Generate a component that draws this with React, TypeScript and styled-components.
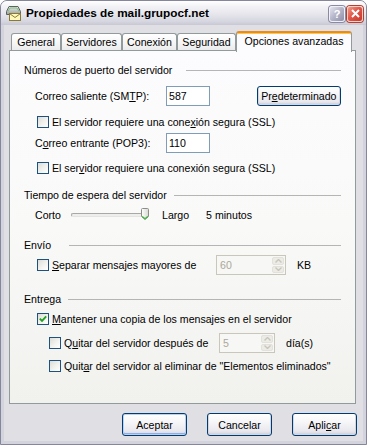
import React from "react";
import styled, { createGlobalStyle } from "styled-components";

const GlobalStyle = createGlobalStyle`
  html, body { margin: 0; padding: 0; background: #ffffff; }
  body {
    font-family: "Liberation Sans", Arial, sans-serif;
    font-size: 10.6px;
    color: #000;
  }
  #root { width: 367px; height: 445px; }
`;

const Window = styled.div`
  width: 367px;
  height: 445px;
  box-sizing: border-box;
  display: flex;
  flex-direction: column;
  border: 1px solid #85859c;
  border-radius: 7px 7px 0 0;
  background: #d3d3de;
  overflow: hidden;
`;

const TitleBar = styled.div`
  height: 24px;
  flex: none;
  display: flex;
  align-items: center;
  padding: 0 3px 0 4px;
  background: linear-gradient(
    to bottom,
    #ffffff 0%,
    #f4f4f7 20%,
    #e6e6ec 55%,
    #d6d6e0 85%,
    #c8c8d4 100%
  );
`;

const TitleText = styled.span`
  margin-left: 4px;
  font-weight: bold;
  font-size: 11.8px;
  color: #000;
  letter-spacing: 0;
`;

const CaptionButtons = styled.div`
  margin-left: auto;
  display: flex;
  gap: 2px;
  padding-top: 1px;
`;

const CapBtn = styled.div<{ $close?: boolean }>`
  width: 16px;
  height: 16px;
  box-sizing: border-box;
  border: 1px solid ${(p) => (p.$close ? "#f4d0c8" : "#f0f0f6")};
  border-radius: 3px;
  box-shadow: 0 0 0 1px ${(p) => (p.$close ? "#b04030" : "#8a8aa4")};
  background: ${(p) =>
    p.$close
      ? "linear-gradient(135deg, #f09a88 0%, #e0584a 45%, #c8382a 100%)"
      : "linear-gradient(135deg, #e4e4ee 0%, #b4b4c8 50%, #8e8eaa 100%)"};
  display: flex;
  align-items: center;
  justify-content: center;
  color: #fff;
  font-weight: bold;
  font-size: 11px;
  font-family: "Liberation Sans", Arial, sans-serif;
`;

const Body = styled.div`
  flex: 1;
  margin: 0 3px 3px;
  background: #e0dfe3;
  display: flex;
  flex-direction: column;
  padding: 6px 7px 5px 5px;
`;

const TabStrip = styled.div`
  height: 19px;
  flex: none;
  display: flex;
  align-items: flex-end;
  padding-left: 2px;
  position: relative;
  z-index: 1;
`;

const Tab = styled.div<{ $w: number; $active?: boolean }>`
  width: ${(p) => p.$w}px;
  height: ${(p) => (p.$active ? 21 : 17)}px;
  margin-bottom: ${(p) => (p.$active ? -2 : 0)}px;
  box-sizing: border-box;
  border: 1px solid #919b9c;
  border-bottom: none;
  border-top: ${(p) => (p.$active ? "2px solid #e68b2c" : "1px solid #919b9c")};
  border-radius: 3px 3px 0 0;
  box-shadow: ${(p) => (p.$active ? "inset 0 1px 0 #ffc73c" : "none")};
  background: ${(p) =>
    p.$active ? "#fcfcfe" : "linear-gradient(to bottom, #ffffff 0%, #f7f7f8 50%, #ebebed 100%)"};
  display: flex;
  align-items: center;
  justify-content: center;
  padding-bottom: ${(p) => (p.$active ? 3 : 0)}px;
  white-space: nowrap;
`;

const Panel = styled.div`
  height: 354px;
  flex: none;
  box-sizing: border-box;
  border: 1px solid #919b9c;
  background: linear-gradient(to bottom, #fcfcfe 0%, #f9f9f8 50%, #f1f1ee 100%);
  padding: 11px 14px 0 14px;
  display: flex;
  flex-direction: column;
`;

const SectionHeader = styled.div<{ $mt: number; $gap: number }>`
  height: 16px;
  margin-top: ${(p) => p.$mt}px;
  display: flex;
  align-items: center;
  white-space: nowrap;
  & > i {
    flex: 1;
    height: 1px;
    margin-left: ${(p) => p.$gap}px;
    background: #b5b5b5;
  }
`;

const Row = styled.div<{ $mt: number; $indent: number; $h?: number }>`
  height: ${(p) => p.$h ?? 20}px;
  margin-top: ${(p) => p.$mt}px;
  margin-left: ${(p) => p.$indent}px;
  display: flex;
  align-items: center;
  white-space: nowrap;
`;

const Label = styled.span<{ $w?: number; $ml?: number }>`
  ${(p) => (p.$w ? `width: ${p.$w}px; flex: none;` : "")}
  margin-left: ${(p) => p.$ml ?? 0}px;
  display: inline-flex;
  align-items: center;
`;

const Mn = styled.span`
  text-decoration: underline;
`;

const TextInput = styled.div<{ $w: number }>`
  width: ${(p) => p.$w}px;
  height: 20px;
  box-sizing: border-box;
  border: 1px solid #7f9db9;
  background: #fff;
  padding-left: 2px;
  display: flex;
  align-items: center;
`;

const Button = styled.div<{ $w: number; $h: number; $ml?: number; $default?: boolean }>`
  width: ${(p) => p.$w}px;
  height: ${(p) => p.$h}px;
  margin-left: ${(p) => p.$ml ?? 0}px;
  box-sizing: border-box;
  border: 1px solid #003c74;
  border-radius: 3px;
  background: linear-gradient(to bottom, #ffffff 0%, #f6f6f8 40%, #e8e8ee 80%, #d4d4de 100%);
  box-shadow: ${(p) =>
    p.$default
      ? "inset 0 0 0 1px #bcd0f0, inset 0 -1px 0 1px #8eaee4"
      : "inset 0 -1px 0 1px #d6d6e0"};
  display: flex;
  align-items: center;
  justify-content: center;
  white-space: nowrap;
`;

const CheckWrap = styled.label<{ $w?: number }>`
  display: inline-flex;
  align-items: center;
  ${(p) => (p.$w ? `width: ${p.$w}px; flex: none;` : "")}
`;

const Box = styled.span`
  width: 12px;
  height: 12px;
  box-sizing: border-box;
  border: 1px solid #1c5180;
  background: linear-gradient(135deg, #dcdcd7 0%, #f2f2ef 55%, #ffffff 100%);
  margin-right: 3px;
  display: inline-flex;
  align-items: center;
  justify-content: center;
  flex: none;
`;

const Spin = styled.div<{ $w: number; $h: number }>`
  width: ${(p) => p.$w}px;
  height: ${(p) => p.$h}px;
  box-sizing: border-box;
  border: 1px solid #c9c7ba;
  background: #f7f7f5;
  color: #aca899;
  display: flex;
  align-items: stretch;
  flex: none;
`;

const SpinText = styled.span`
  flex: 1;
  padding-left: 3px;
  display: flex;
  align-items: center;
`;

const SpinButtons = styled.div`
  width: 14px;
  display: flex;
  flex-direction: column;
  gap: 1px;
  padding: 1px;
  box-sizing: border-box;
`;

const SpinBtn = styled.div`
  flex: 1;
  border-radius: 2px;
  background: #ecebe6;
  border: 1px solid #e2e1da;
  display: flex;
  align-items: center;
  justify-content: center;
`;

const SliderBox = styled.div`
  width: 79px;
  height: 12px;
  margin-left: 0;
  position: relative;
  display: flex;
  align-items: center;
  flex: none;
`;

const Track = styled.div`
  width: 75px;
  height: 4px;
  box-sizing: border-box;
  border: 1px solid #a8a8a4;
  border-right-color: #e4e4e2;
  border-bottom-color: #e4e4e2;
  background: #eeeeec;
  border-radius: 2px;
`;

const Thumb = styled.svg`
  position: absolute;
  right: 1px;
  top: -1px;
`;

const ButtonRow = styled.div`
  margin-top: 9px;
  height: 23px;
  display: flex;
  justify-content: flex-end;
  gap: 20px;
  padding-right: 0;
  margin-right: -1px;
`;

function Check({ checked, children, w }: { checked?: boolean; children: React.ReactNode; w?: number }) {
  return (
    <CheckWrap $w={w}>
      <Box>
        {checked && (
          <svg width="8" height="8" viewBox="0 0 8 8">
            <path d="M0.8 3.6 L3 5.8 L7.2 1.4" fill="none" stroke="#21a121" strokeWidth="1.9" />
          </svg>
        )}
      </Box>
      <span>{children}</span>
    </CheckWrap>
  );
}

function Arrow({ up }: { up?: boolean }) {
  return (
    <svg width="7" height="4" viewBox="0 0 7 4">
      <path d={up ? "M0.5 3.5 L3.5 0.5 L6.5 3.5" : "M0.5 0.5 L3.5 3.5 L6.5 0.5"} fill="none" stroke="#c8c6bc" strokeWidth="1.4" />
    </svg>
  );
}

function SpinBox({ value, w, h }: { value: string; w: number; h: number }) {
  return (
    <Spin $w={w} $h={h}>
      <SpinText>{value}</SpinText>
      <SpinButtons>
        <SpinBtn>
          <Arrow up />
        </SpinBtn>
        <SpinBtn>
          <Arrow />
        </SpinBtn>
      </SpinButtons>
    </Spin>
  );
}

function MailIcon() {
  return (
    <svg width="17" height="16" viewBox="0 0 17 16">
      <defs>
        <linearGradient id="srv" x1="0" y1="0" x2="0" y2="1">
          <stop offset="0" stopColor="#e8ece8" />
          <stop offset="1" stopColor="#9aa0a0" />
        </linearGradient>
      </defs>
      <path d="M1.5 6.5 L4 1.5 H13 L15.5 6.5 V9.5 H1.5 Z" fill="url(#srv)" stroke="#5a6262" />
      <path d="M3 6.5 L5 3 H12 L14 6.5" fill="none" stroke="#7fbf7f" strokeWidth="1" />
      <rect x="4.5" y="8.5" width="11" height="7" fill="#fff8b8" stroke="#8a7a36" />
      <path d="M4.5 8.5 L10 12.5 L15.5 8.5" fill="none" stroke="#8a7a36" />
    </svg>
  );
}

export default function App() {
  return (
    <>
      <GlobalStyle />
      <Window>
        <TitleBar>
          <MailIcon />
          <TitleText>Propiedades de mail.grupocf.net</TitleText>
          <CaptionButtons>
            <CapBtn>?</CapBtn>
            <CapBtn $close>
              <svg width="9" height="9" viewBox="0 0 9 9">
                <path d="M1 1 L8 8 M8 1 L1 8" stroke="#fff" strokeWidth="2" />
              </svg>
            </CapBtn>
          </CaptionButtons>
        </TitleBar>
        <Body>
          <TabStrip>
            <Tab $w={50}>General</Tab>
            <Tab $w={61}>Servidores</Tab>
            <Tab $w={55}>Conexión</Tab>
            <Tab $w={59}>Seguridad</Tab>
            <Tab $w={116} $active>
              Opciones avanzadas
            </Tab>
          </TabStrip>
          <Panel>
            <SectionHeader $mt={0} $gap={14}>
              <span>Números de puerto del servidor</span>
              <i />
            </SectionHeader>
            <Row $mt={8} $indent={11}>
              <Label $w={131}>
                Correo saliente (SM<Mn>T</Mn>P):
              </Label>
              <TextInput $w={44}>587</TextInput>
              <Button $w={85} $h={20} $ml={47}>
                Pr<Mn>e</Mn>determinado
              </Button>
            </Row>
            <Row $mt={8} $indent={13} $h={16}>
              <Check>
                El servidor requiere una cone<Mn>x</Mn>ión segura (SSL)
              </Check>
            </Row>
            <Row $mt={3} $indent={11}>
              <Label $w={131}>
                C<Mn>o</Mn>rreo entrante (POP3):
              </Label>
              <TextInput $w={44}>110</TextInput>
            </Row>
            <Row $mt={7} $indent={13} $h={16}>
              <Check>
                El ser<Mn>v</Mn>idor requiere una conexión segura (SSL)
              </Check>
            </Row>

            <SectionHeader $mt={11} $gap={7}>
              <span>Tiempo de espera del servidor</span>
              <i />
            </SectionHeader>
            <Row $mt={2} $indent={11}>
              <Label $w={36}>Corto</Label>
              <SliderBox>
                <Track />
                <Thumb width="8" height="12" viewBox="0 0 8 12">
                  <defs>
                    <linearGradient id="thumb" x1="0" y1="0" x2="1" y2="0">
                      <stop offset="0" stopColor="#ffffff" />
                      <stop offset="1" stopColor="#d8d8d4" />
                    </linearGradient>
                  </defs>
                  <path d="M0.5 1.5 Q0.5 0.5 1.5 0.5 H6.5 Q7.5 0.5 7.5 1.5 V8.5 L4 11.5 L0.5 8.5 Z" fill="url(#thumb)" stroke="#8c8c88" />
                  <path d="M1.2 8.4 L4 10.8 L6.8 8.4" fill="none" stroke="#3cb83c" strokeWidth="1.2" />
                </Thumb>
              </SliderBox>
              <Label $ml={12}>Largo</Label>
              <Label $ml={17}>5 minutos</Label>
            </Row>

            <SectionHeader $mt={12} $gap={18}>
              <span>Envío</span>
              <i />
            </SectionHeader>
            <Row $mt={2} $indent={13}>
              <Check w={179}>
                <Mn>S</Mn>eparar mensajes mayores de
              </Check>
              <SpinBox value="60" w={70} h={20} />
              <Label $ml={11}>KB</Label>
            </Row>

            <SectionHeader $mt={16} $gap={7}>
              <span>Entrega</span>
              <i />
            </SectionHeader>
            <Row $mt={4} $indent={13} $h={16}>
              <Check checked>
                <Mn>M</Mn>antener una copia de los mensajes en el servidor
              </Check>
            </Row>
            <Row $mt={6} $indent={25}>
              <Check w={170}>
                Q<Mn>u</Mn>itar del servidor después de
              </Check>
              <SpinBox value="5" w={56} h={20} />
              <Label $ml={11}>día(s)</Label>
            </Row>
            <Row $mt={5} $indent={25} $h={16}>
              <Check>
                Quit<Mn>a</Mn>r del servidor al eliminar de "Elementos eliminados"
              </Check>
            </Row>
          </Panel>
          <ButtonRow>
            <Button $w={65} $h={23} $default>
              Aceptar
            </Button>
            <Button $w={65} $h={23}>
              Cancelar
            </Button>
            <Button $w={65} $h={23}>
              Apli<Mn>c</Mn>ar
            </Button>
          </ButtonRow>
        </Body>
      </Window>
    </>
  );
}
